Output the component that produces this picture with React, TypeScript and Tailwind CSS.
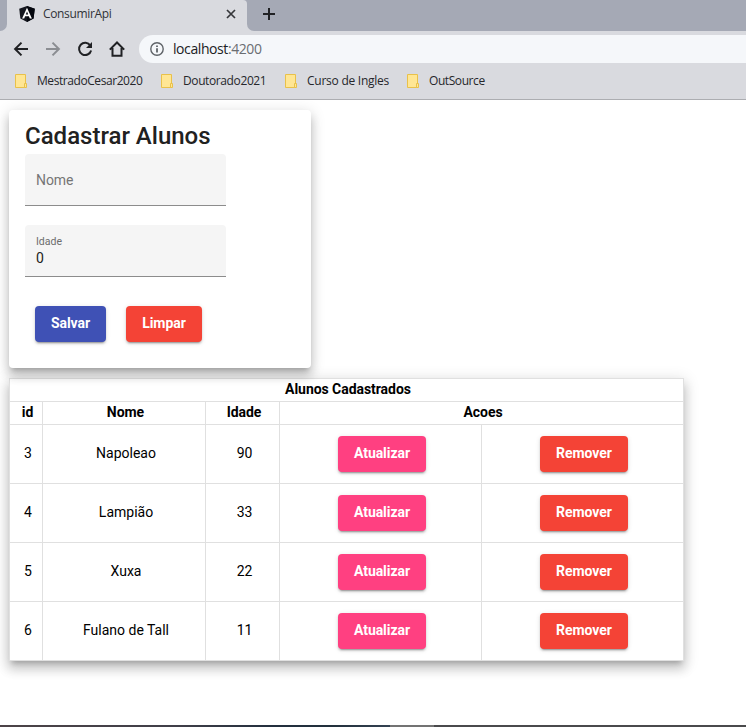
import React from "react";

const alunos = [
  { id: 3, nome: "Napoleao", idade: 90 },
  { id: 4, nome: "Lampião", idade: 33 },
  { id: 5, nome: "Xuxa", idade: 22 },
  { id: 6, nome: "Fulano de Tall", idade: 11 },
];

const bookmarks = [
  { label: "MestradoCesar2020", slot: "w-[146px]", tracking: "tracking-[-0.43px]" },
  { label: "Doutorado2021", slot: "w-[124px]", tracking: "tracking-[-0.39px]" },
  { label: "Curso de Ingles", slot: "w-[122px]", tracking: "tracking-[-0.25px]" },
  { label: "OutSource", slot: "w-[120px]", tracking: "tracking-[-0.42px]" },
];

const elevation =
  "shadow-[0_5px_5px_-3px_rgba(0,0,0,0.2),0_8px_10px_1px_rgba(0,0,0,0.14),0_3px_14px_2px_rgba(0,0,0,0.12)]";

const colors = {
  primary: "bg-[#3f51b5]",
  accent: "bg-[#ff4081]",
  warn: "bg-[#f44336]",
};

function Button({ label, color, width }: { label: string; color: keyof typeof colors; width: string }) {
  return (
    <button
      className={`flex h-9 items-center justify-center rounded-[4px] pb-[2px] text-[14px] leading-4 font-bold tracking-[-0.05px] text-white shadow-[0_3px_1px_-2px_rgba(0,0,0,0.2),0_2px_2px_0_rgba(0,0,0,0.14),0_1px_5px_0_rgba(0,0,0,0.12)] ${colors[color]} ${width}`}
    >
      {label}
    </button>
  );
}

function AngularLogo() {
  return (
    <svg width="16" height="16" viewBox="0 0 16 16">
      <path d="M8 0 L15.8 2.7 L14.6 12.6 L8 16 L1.4 12.6 L.2 2.7Z" fill="#15171f" />
      <path d="M8 0 L15.8 2.7 L14.6 12.6 L8 16Z" fill="#05070e" />
      <path
        fillRule="evenodd"
        d="M8 1.7 L12.9 12.6 H10.8 L9.9 10.3 H6.1 L5.2 12.6 H3.1Z M8 5.5 L6.8 8.5 H9.2Z"
        fill="#fff"
      />
    </svg>
  );
}

function TabStrip() {
  return (
    <div className="flex h-[31px] bg-[#a5a9b5]">
      <div className="w-[7px] bg-[#d9dadf]">
        <div className="h-full rounded-br-[7px] bg-[#a5a9b5]" />
      </div>
      <div className="flex w-[240px] items-center rounded-tr-[4px] bg-[#d9dadf] pr-[11px] pb-[3px] pl-3">
        <AngularLogo />
        <span className="ml-2 flex-1 text-[12px] leading-4 tracking-[-0.35px] text-[#303238]">ConsumirApi</span>
        <svg width="10" height="10" viewBox="0 0 10 10" stroke="#35363a" strokeWidth="1.7">
          <path d="M1 1 L9 9 M9 1 L1 9" />
        </svg>
      </div>
      <div className="flex-1 bg-[#d9dadf]">
        <div className="flex h-full items-center rounded-bl-[7px] bg-[#a5a9b5] pb-[3px] pl-4">
          <svg width="12" height="12" viewBox="0 0 12 12" stroke="#202124" strokeWidth="2">
            <path d="M6 0 V12 M0 6 H12" />
          </svg>
        </div>
      </div>
    </div>
  );
}

function Toolbar() {
  return (
    <div className="flex h-9 items-center pl-[13px]">
      <svg width="16" height="16" viewBox="0 0 16 16" fill="none" stroke="#202124" strokeWidth="2">
        <path d="M15 8 H2.5 M8.5 1.6 L2.1 8 L8.5 14.4" />
      </svg>
      <svg className="ml-4" width="16" height="16" viewBox="0 0 16 16" fill="none" stroke="#8b8d92" strokeWidth="2">
        <path d="M1 8 H13.5 M7.5 1.6 L13.9 8 L7.5 14.4" />
      </svg>
      <svg className="ml-4" width="16" height="16" viewBox="0 0 16 16" fill="none" stroke="#202124" strokeWidth="2">
        <path d="M13.3 4.6 A6.1 6.1 0 1 0 14.1 9.4" />
        <path d="M15 1 V7 H9Z" fill="#202124" stroke="none" />
      </svg>
      <svg className="ml-4" width="16" height="16" viewBox="0 0 16 16" fill="none" stroke="#202124" strokeWidth="2">
        <path d="M.8 8.6 L8 1.5 L15.2 8.6 M3.5 7 V14.8 H12.5 V7" />
      </svg>
      <div className="ml-[14px] flex h-7 flex-1 items-center rounded-l-full bg-[#f5f7fa] pl-[11px]">
        <svg width="14" height="14" viewBox="0 0 14 14" fill="none" stroke="#5f6368" strokeWidth="1.4">
          <circle cx="7" cy="7" r="6.2" />
          <path d="M7 6.2 V10.6 M7 3.5 V5" strokeWidth="1.8" />
        </svg>
        <span className="ml-[9px] text-[14px] leading-5 tracking-[-0.42px] text-[#202124]">
          localhost<span className="text-[#6a6d72]">:4200</span>
        </span>
      </div>
    </div>
  );
}

function Bookmarks() {
  return (
    <div className="flex h-[32px] items-center pb-[4px] pl-[15px]">
      {bookmarks.map((b) => (
        <div key={b.label} className={`flex items-center ${b.slot}`}>
          <svg width="12" height="14" viewBox="0 0 12 14" fill="#ffe694" stroke="#e9c14a">
            <path d="M.5 .5 H10.5 V13.5 H.5Z" />
            <path d="M9.5 9.5 H11.5 V13.5 H9.5Z" />
          </svg>
          <span className={`ml-[10px] text-[12px] leading-4 whitespace-nowrap text-[#26272b] ${b.tracking}`}>
            {b.label}
          </span>
        </div>
      ))}
    </div>
  );
}

function Form() {
  return (
    <section className={`relative z-10 h-[258px] w-[302px] rounded-[4px] bg-white px-4 pt-[10px] ${elevation}`}>
      <h1 className="h-[34px] text-[24px] leading-8 font-medium text-[#212121]">Cadastrar Alunos</h1>
      <div className="h-[52px] w-[201px] rounded-t-[4px] border-b border-[#8c8c8c] bg-[#f5f5f5] pt-[17px] pl-[11px] text-[14px] leading-[18px] tracking-[-0.1px] text-[#757575]">
        Nome
      </div>
      <div className="mt-[19px] h-[52px] w-[201px] rounded-t-[4px] border-b border-[#8c8c8c] bg-[#f5f5f5] pt-[10px] pl-[11px]">
        <div className="text-[10.5px] leading-[14px] text-[#6c6c6c]">Idade</div>
        <div className="text-[14px] leading-[18px] text-[#212121]">0</div>
      </div>
      <div className="mt-[29px] flex gap-5 pl-[10px]">
        <Button label="Salvar" color="primary" width="w-[71px]" />
        <Button label="Limpar" color="warn" width="w-[76px]" />
      </div>
    </section>
  );
}

const cell = "flex items-center justify-center border-r border-b border-[#e0e0e0]";
const textCell = `pb-[2px] pl-1 ${cell}`;
const headCell = `pb-[2px] pl-[3px] font-bold tracking-[-0.05px] ${cell}`;

function Table() {
  return (
    <section
      className={`mt-[10px] grid w-[675px] grid-cols-[33px_163px_74px_202px_202px] grid-rows-[23px_23px_repeat(4,59px)] border-t border-l border-[#e0e0e0] bg-white text-[14px] leading-4 text-black ${elevation}`}
    >
      <div className={`col-span-5 ${headCell}`}>Alunos Cadastrados</div>
      <div className={headCell}>id</div>
      <div className={headCell}>Nome</div>
      <div className={headCell}>Idade</div>
      <div className={`col-span-2 ${headCell}`}>Acoes</div>
      {alunos.map((a) => (
        <React.Fragment key={a.id}>
          <div className={textCell}>{a.id}</div>
          <div className={textCell}>{a.nome}</div>
          <div className={textCell}>{a.idade}</div>
          <div className={`pl-[3px] ${cell}`}>
            <Button label="Atualizar" color="accent" width="w-[88px]" />
          </div>
          <div className={`pl-[3px] ${cell}`}>
            <Button label="Remover" color="warn" width="w-[88px]" />
          </div>
        </React.Fragment>
      ))}
    </section>
  );
}

export default function App() {
  return (
    <div className="flex h-[727px] w-[746px] flex-col overflow-hidden bg-white">
      <header className="h-[100px] shrink-0 border-b border-[#acadb1] bg-[#d9dadf] font-['Open_Sans','Noto_Sans',sans-serif]">
        <TabStrip />
        <Toolbar />
        <Bookmarks />
      </header>
      <main className="flex-1 overflow-hidden bg-white pt-[10px] pl-[9px] font-['Roboto',sans-serif]">
        <Form />
        <Table />
      </main>
      <div className="flex h-[2px] shrink-0 bg-[#4a4a4c]">
        <div className="w-[390px] bg-[linear-gradient(to_right,#4c4347,#403f48_45%,#232f3e_70%,#22303c_85%,#344252)]" />
        <div className="w-11 bg-[#737373]" />
      </div>
    </div>
  );
}
